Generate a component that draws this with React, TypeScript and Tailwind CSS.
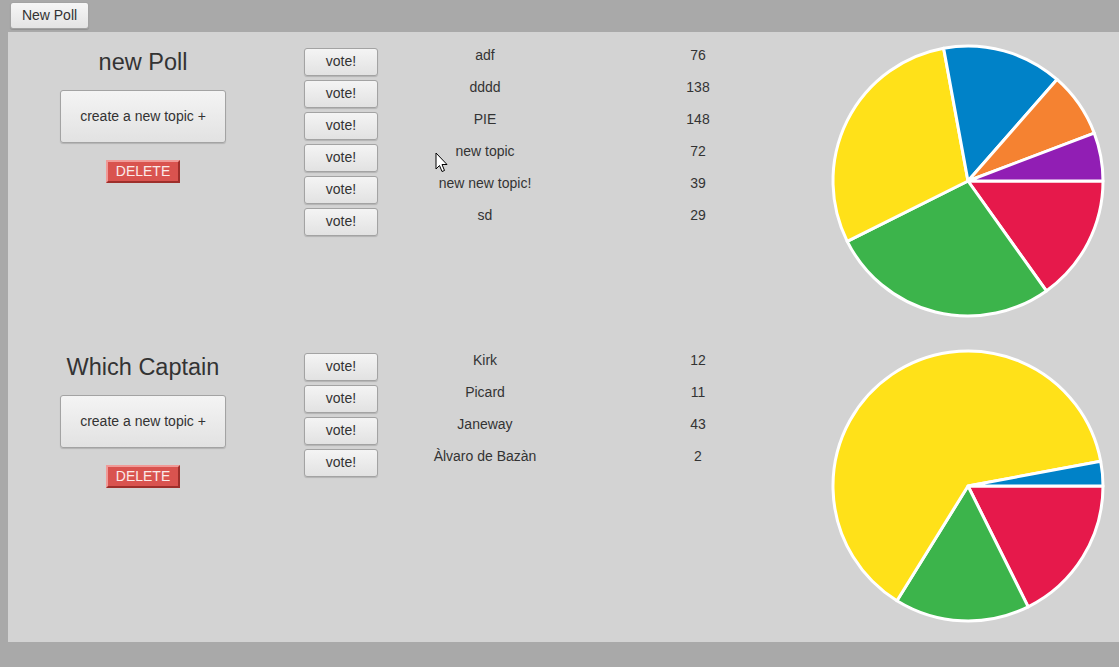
import React from "react";

type Topic = { name: string; votes: number };
type Poll = { title: string; topics: Topic[] };

const COLORS = ["#e6194b", "#3cb44b", "#ffe119", "#0082c8", "#f58231", "#911eb4"];

const polls: Poll[] = [
  {
    title: "new Poll",
    topics: [
      { name: "adf", votes: 76 },
      { name: "dddd", votes: 138 },
      { name: "PIE", votes: 148 },
      { name: "new topic", votes: 72 },
      { name: "new new topic!", votes: 39 },
      { name: "sd", votes: 29 },
    ],
  },
  {
    title: "Which Captain",
    topics: [
      { name: "Kirk", votes: 12 },
      { name: "Picard", votes: 11 },
      { name: "Janeway", votes: 43 },
      { name: "Àlvaro de Bazàn", votes: 2 },
    ],
  },
];

function Pie({ topics }: { topics: Topic[] }) {
  const total = topics.reduce((s, t) => s + t.votes, 0);
  const cx = 150;
  const cy = 149;
  const r = 135;
  let start = 0;
  const slices = topics.map((t, i) => {
    const sweep = (t.votes / total) * Math.PI * 2;
    const end = start + sweep;
    const x1 = cx + r * Math.cos(start);
    const y1 = cy + r * Math.sin(start);
    const x2 = cx + r * Math.cos(end);
    const y2 = cy + r * Math.sin(end);
    const large = sweep > Math.PI ? 1 : 0;
    const d = `M ${cx} ${cy} L ${x1} ${y1} A ${r} ${r} 0 ${large} 1 ${x2} ${y2} Z`;
    start = end;
    return <path key={i} d={d} fill={COLORS[i % COLORS.length]} stroke="#ffffff" strokeWidth={3} strokeLinejoin="round" />;
  });
  return (
    <svg width={300} height={305} viewBox="0 0 300 305">
      {slices}
    </svg>
  );
}

function PollRow({ poll }: { poll: Poll }) {
  return (
    <div className="flex h-[305px]">
      <div className="w-[270px] flex flex-col items-center pt-[16px]">
        <h2 className="text-[23.5px] leading-[28px] text-[#333]">{poll.title}</h2>
        <button className="mt-[14px] w-[166px] h-[53px] rounded-[3px] border border-[#a3a3a3] bg-gradient-to-b from-[#f4f4f4] to-[#e2e2e2] text-[14px] leading-[16px] pb-[2px] text-[#333] shadow-[0_1px_1px_rgba(0,0,0,0.15)]">
          create a new topic +
        </button>
        <button className="mt-[17px] w-[74px] h-[23px] bg-[#d9534f] text-[14px] leading-[17px] pb-[1px] text-[#fbeaea] border-2 border-t-[#f09a97] border-l-[#f09a97] border-b-[#9e2f2b] border-r-[#9e2f2b]">
          DELETE
        </button>
      </div>
      <div className="ml-[26px] w-[74px] flex flex-col gap-[4px] pt-[16px]">
        {poll.topics.map((t) => (
          <button
            key={t.name}
            className="w-[74px] h-[28px] rounded-[3px] border border-[#a3a3a3] bg-gradient-to-b from-[#f4f4f4] to-[#e2e2e2] text-[14px] leading-[24px] pb-[2px] text-[#333] shadow-[0_1px_1px_rgba(0,0,0,0.15)]"
          >
            vote!
          </button>
        ))}
      </div>
      <div className="ml-[2px] w-[210px] flex flex-col pt-[7px]">
        {poll.topics.map((t) => (
          <div key={t.name} className="h-[32px] leading-[32px] text-center text-[14px] text-[#333]">
            {t.name}
          </div>
        ))}
      </div>
      <div className="w-[216px] flex flex-col pt-[7px]">
        {poll.topics.map((t) => (
          <div key={t.name} className="h-[32px] leading-[32px] text-center text-[14px] text-[#333]">
            {t.votes}
          </div>
        ))}
      </div>
      <div className="ml-[12px]">
        <Pie topics={poll.topics} />
      </div>
    </div>
  );
}

export default function App() {
  return (
    <div className="relative min-h-[667px] w-[1119px] overflow-hidden bg-[#a9a9a9] font-['Liberation_Sans',Arial,sans-serif]">
      <div className="h-[32px] pl-[10px] pt-[2px]">
        <button className="w-[79px] h-[27px] rounded-[3px] border border-[#a3a3a3] bg-gradient-to-b from-[#f6f6f6] to-[#e4e4e4] text-[14px] text-[#333] shadow-[0_1px_1px_rgba(0,0,0,0.15)]">
          New Poll
        </button>
      </div>
      <div className="ml-[8px] w-[1140px] bg-[#d3d3d3]">
        {polls.map((p) => (
          <PollRow key={p.title} poll={p} />
        ))}
      </div>
      <svg className="absolute left-[435px] top-[152px]" width="13" height="21" viewBox="0 0 13 21">
        <path d="M1 1 L1 17 L4.5 13.5 L7 19.5 L9.5 18.5 L7 12.5 L12 12.5 Z" fill="#ffffff" stroke="#000000" strokeWidth="1" strokeLinejoin="round" />
      </svg>
    </div>
  );
}
